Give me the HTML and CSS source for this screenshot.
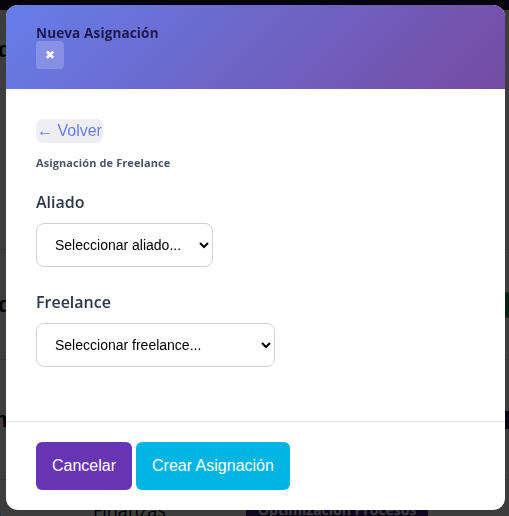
FILE: index.html
```html
<!DOCTYPE html>
<html lang="es">
<head>
<meta charset="utf-8">
<title>Nueva Asignación</title>
<link rel="stylesheet" href="styles.css">
</head>
<body>
<div class="page">
  <div class="topbar"></div>
  <div class="row r1"><span class="cut">Ad</span></div>
  <div class="row r2"></div>
  <div class="row r3"><span class="cut">Ad</span><span class="pill green"></span></div>
  <div class="row r4"><span class="cut">an</span><span class="pill dark"></span></div>
  <div class="row r5"><span class="cut">z</span><span class="cell">Finanzas</span><span class="badge">Optimización Procesos</span></div>
</div>
<div class="overlay"></div>
<div class="modal">
  <div class="modal-header">
    <h2 class="modal-title">Nueva Asignación</h2>
    <button class="close-btn" type="button">&#x2716;</button>
  </div>
  <div class="modal-body">
    <button class="back-btn" type="button">&larr; Volver</button>
    <h3 class="section-title">Asignación de Freelance</h3>
    <div class="form-group">
      <label class="form-label">Aliado</label>
      <select class="form-select select-aliado">
        <option>Seleccionar aliado...</option>
      </select>
    </div>
    <div class="form-group">
      <label class="form-label">Freelance</label>
      <select class="form-select select-freelance">
        <option>Seleccionar freelance...</option>
      </select>
    </div>
  </div>
  <div class="modal-footer">
    <button class="btn btn-cancel" type="button">Cancelar</button>
    <button class="btn btn-create" type="button">Crear Asignación</button>
  </div>
</div>
</body>
</html>
```
FILE: styles.css
```css
* { box-sizing: border-box; }
html, body { margin: 0; padding: 0; }
body {
  width: 509px;
  height: 516px;
  overflow: hidden;
  background: #ffffff;
  font-family: "Liberation Sans", Arial, sans-serif;
}
.page {
  display: flex;
  flex-direction: column;
}
.topbar {
  height: 10px;
  background: #1e1632;
}
.row {
  border-bottom: 1px solid #e6e6e6;
  display: flex;
  align-items: center;
}
.r1 { height: 80px; }
.r2 { height: 160px; }
.r3 { height: 110px; }
.r4 { height: 120px; }
.r5 { height: 40px; align-items: flex-start; padding-top: 18px; border-bottom: none; }
.cut {
  margin-left: -18px;
  width: 24px;
  color: #000;
  font-weight: 700;
  font-size: 22px;
  line-height: 1;
}
.r5 .cut { margin-left: -10px; width: 16px; margin-top: 0; }
.cell {
  margin-left: 87px;
  font-family: "Open Sans", sans-serif;
  font-size: 18px;
  color: #000;
  line-height: 1;
  margin-top: 3px;
}
.badge {
  margin-left: 80px;
  background: #3a1f7a;
  color: #fff;
  font-family: "Open Sans", sans-serif;
  font-size: 14px;
  font-weight: 700;
  padding: 4px 12px;
  border-radius: 4px;
  line-height: 1.2;
}
.pill {
  margin-left: auto;
  width: 16px;
  height: 26px;
  border-radius: 8px;
  margin-right: -8px;
}
.pill.green { background: #0a8a3a; }
.pill.dark { background: #2a1060; height: 18px; border-radius: 3px; }
.overlay {
  position: fixed;
  inset: 0;
  background: rgba(0, 0, 0, 0.76);
}
.modal {
  position: fixed;
  top: 5px;
  left: 6px;
  width: 499px;
  background: #fff;
  border-radius: 12px;
  overflow: hidden;
  display: flex;
  flex-direction: column;
}
.modal-header {
  background: linear-gradient(135deg, #667eea 0%, #764ba2 100%);
  padding: 20px 30px;
  display: flex;
  flex-direction: column;
  align-items: flex-start;
}
.modal-title {
  margin: 0;
  font-family: "Open Sans", sans-serif;
  font-weight: 700;
  font-size: 13.5px;
  line-height: 16px;
  color: #1c1a4a;
  letter-spacing: 0.15px;
}
.close-btn {
  width: 28px;
  height: 28px;
  border: none;
  border-radius: 4px;
  background: rgba(255, 255, 255, 0.2);
  color: #fff;
  font-size: 12px;
  padding: 0;
  display: flex;
  align-items: center;
  justify-content: center;
}
.modal-body {
  padding: 30px 30px 30px;
  display: flex;
  flex-direction: column;
  align-items: flex-start;
}
.back-btn {
  border: none;
  background: #efeff3;
  color: #667eea;
  font-family: "Liberation Sans", Arial, sans-serif;
  font-size: 16px;
  height: 24px;
  padding: 0 1px;
  border-radius: 7px;
}
.section-title {
  margin: 12px 0 0;
  font-family: "Open Sans", sans-serif;
  font-weight: 700;
  font-size: 11px;
  line-height: 16px;
  color: #4a5568;
  letter-spacing: 0.1px;
}
.form-group {
  margin-top: 19px;
  margin-bottom: 0;
  display: flex;
  flex-direction: column;
  align-items: flex-start;
}
.form-group + .form-group { margin-top: 23px; margin-bottom: 24px; }
.form-label {
  font-family: "Open Sans", sans-serif;
  font-weight: 600;
  font-size: 16px;
  line-height: 24px;
  color: #2d3748;
  margin-bottom: 9px;
}
.form-select {
  height: 44px;
  padding: 0 12px 0 14px;
  font-family: "Liberation Sans", Arial, sans-serif;
  font-size: 14px;
  color: #000;
  background: #fff;
  border: 1px solid #d0d0d8;
  border-radius: 8px;
}
.select-aliado { width: 177px; }
.select-freelance { width: 239px; }
.modal-footer {
  border-top: 1px solid #e6e6e6;
  padding: 20px 30px;
  display: flex;
  gap: 4px;
}
.btn {
  height: 48px;
  padding: 0 16px;
  border: none;
  border-radius: 6px;
  color: #fff;
  font-family: "Liberation Sans", Arial, sans-serif;
  font-size: 16px;
}
.btn-cancel { background: #6734b3; }
.btn-create { background: #00b4e3; }
```
